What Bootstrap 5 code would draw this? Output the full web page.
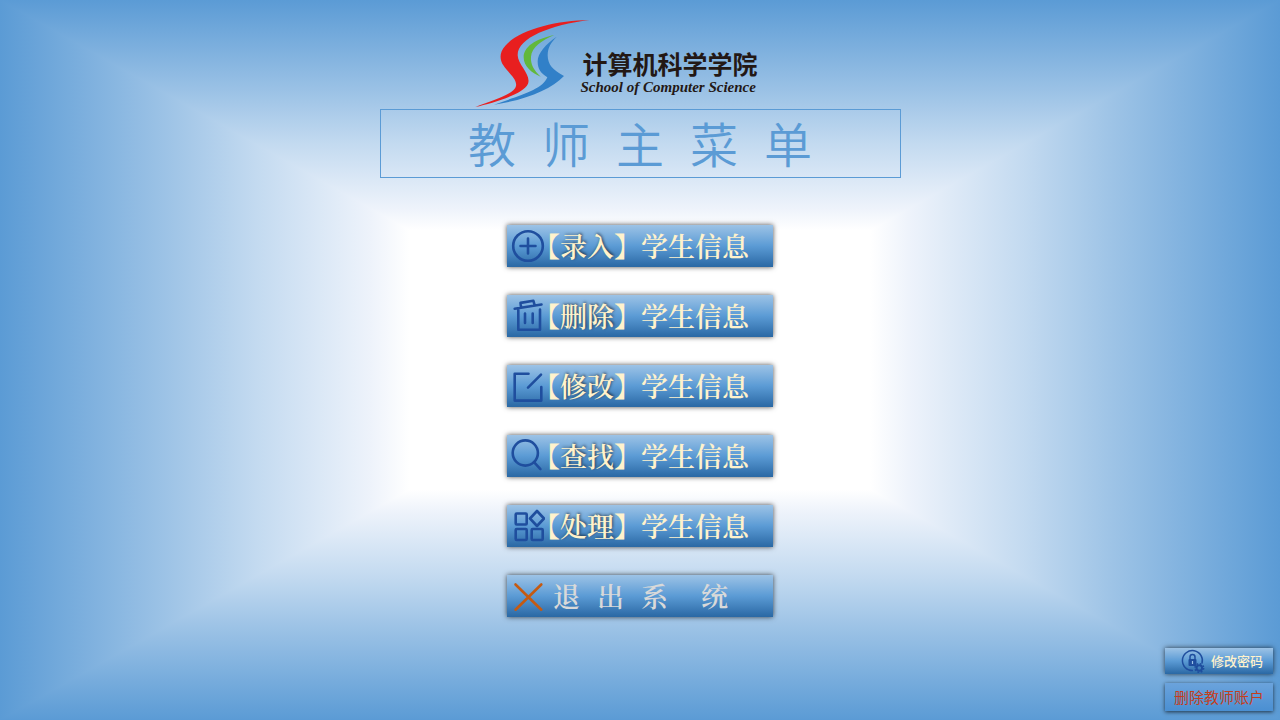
<!DOCTYPE html>
<html lang="zh-CN">
<head>
<meta charset="utf-8">
<meta name="viewport" content="width=device-width, initial-scale=1">
<title>教师主菜单</title>
<link href="https://cdn.jsdelivr.net/npm/bootstrap@5.3.0/dist/css/bootstrap.min.css" rel="stylesheet">
<style>
  :root {
    --ramp: #5b9bd5 0%, #9dc3e6 13%, #c3daf0 20%, #eef3fb 29%, #fff 32%, #fff 68%, #eef3fb 71%, #c3daf0 80%, #9dc3e6 87%, #5b9bd5 100%;
  }
  body {
    font-family: "Liberation Sans", "Noto Sans CJK SC", sans-serif;
    background: linear-gradient(to bottom, var(--ramp));
  }
  /* left and right wedges of the rectangular gradient */
  .wedges {
    background: linear-gradient(to right, var(--ramp));
    clip-path: polygon(0 0, 50% 50%, 100% 0, 100% 100%, 50% 50%, 0 100%);
    z-index: -1;
  }
  .page-column { max-width: 521px; padding-top: 19px; }
  .brand { padding-left: 95px; height: 90px; }
  .brand-mark { width: 115px; height: 88px; }
  .brand-text { margin-left: -9px; padding-top: 26px; color: #231815; }
  .brand-zh { font: 700 25px/36px "Noto Sans CJK SC", sans-serif; padding-left: 2px; }
  .brand-en { font: italic 700 15px/12px "Liberation Serif", serif; white-space: nowrap; }
  .page-title {
    border: 1px solid #5b9bd5; color: #5b9bd5; height: 69px; gap: 26px;
    font: 350 48px/64px "Noto Sans CJK SC", sans-serif;
  }
  .menu-list { width: 266px; margin-top: 47px; gap: 28px; }
  .menu-btn, .corner-btn {
    border: 0; padding: 0; white-space: nowrap; color: #fff2cc;
    background: linear-gradient(#9dc3e6, #5b9bd5 50%, #2a68a4);
    box-shadow: 0 0 5px rgba(0, 0, 0, .7);
  }
  .menu-btn {
    height: 42px;
    font: 600 27px/42px "Noto Serif CJK SC", "Noto Sans CJK SC", serif;
  }
  .menu-btn svg { width: 38px; height: 42px; flex: none; }
  .menu-label { margin-left: -12px; }
  .verb { text-shadow: 1px -1px 3px rgba(0, 0, 0, .6); }
  .exit-label { color: #d9d9d9; margin-left: 8px; gap: 17px; }
  .line-icon { fill: none; stroke: #1f4e9e; stroke-width: 2.6; stroke-linecap: round; stroke-linejoin: round; }
  .corner { width: 108px; gap: 9px; margin: 31px 7px 9px auto; }
  .corner-btn { font: 500 13px/26px "Noto Sans CJK SC", sans-serif; height: 26px; }
  .corner-btn svg { width: 46px; height: 26px; flex: none; }
  .corner-delete {
    height: 28px; font-weight: 400; font-size: 15px; line-height: 26px; color: #c43e1c;
    background: linear-gradient(#6ba3dc, #4a8fd2);
    box-shadow: 0 1px 4px rgba(0, 0, 0, .7);
  }
</style>
</head>
<body class="min-vh-100 d-flex flex-column position-relative">
<div class="wedges position-absolute top-0 start-0 w-100 h-100"></div>

<main class="page-column w-100 mx-auto">
  <header class="brand d-flex">
    <svg class="brand-mark flex-shrink-0" viewBox="45 28 345 264" role="img" aria-label="学院标志">
      <path fill="#e81f1f" d="M388 31C290 32 178 60 136 108C117 129 119 150 130 167C145 190 172 208 168 229C165 252 105 270 46 292C100 279 190 254 204 222C214 195 174 166 173 137C172 84 272 46 388 31Z"/>
      <path fill="#62b83b" d="M283 76C226 88 191 111 191 143C191 169 214 190 242 201C222 182 211 163 213 141C215 112 246 92 283 76Z"/>
      <path fill="#3180c8" d="M290 81C258 103 233 130 233 155C233 180 244 192 262 203C248 241 171 260 102 285C200 270 272 240 312 199C279 182 263 165 263 137C263 113 272 100 290 81Z"/>
    </svg>
    <div class="brand-text">
      <div class="brand-zh">计算机科学学院</div>
      <div class="brand-en">School of Computer Science</div>
    </div>
  </header>

  <h1 class="page-title d-flex justify-content-center mb-0">
    <span>教</span><span>师</span><span>主</span><span>菜</span><span>单</span>
  </h1>

  <nav class="menu-list d-flex flex-column mx-auto" aria-label="主菜单">
    <button type="button" class="menu-btn d-flex">
      <svg class="line-icon" viewBox="0 0 38 42"><circle cx="21" cy="21" r="14.8"/><path d="M13.5 21h15M21 13.5v15"/></svg>
      <span class="menu-label">【<span class="verb">录入</span>】学生信息</span>
    </button>
    <button type="button" class="menu-btn d-flex">
      <svg class="line-icon" viewBox="0 0 38 42"><path d="M7.7 13.700L34.5 9.500M14 12.100L13.5 7.900 26.4 5.800 27.6 10M11.3 14.500v20.3H33V14.500M18 18.500v9.5M25.7 18.500v9.5"/></svg>
      <span class="menu-label">【<span class="verb">删除</span>】学生信息</span>
    </button>
    <button type="button" class="menu-btn d-flex">
      <svg class="line-icon" viewBox="0 0 38 42"><path d="M21.5 8.800H7.7V35.600H34.3V22M21 22.600L34 9.600"/></svg>
      <span class="menu-label">【<span class="verb">修改</span>】学生信息</span>
    </button>
    <button type="button" class="menu-btn d-flex">
      <svg class="line-icon" viewBox="0 0 38 42"><circle cx="18.3" cy="18" r="12.6"/><path d="M27 27.200L33.4 34.100"/></svg>
      <span class="menu-label">【<span class="verb">查找</span>】学生信息</span>
    </button>
    <button type="button" class="menu-btn d-flex">
      <svg class="line-icon" viewBox="0 0 38 42"><rect x="8.7" y="8.500" width="11" height="11" rx="1"/><rect x="8.7" y="24" width="11" height="11" rx="1"/><rect x="24.7" y="24" width="11" height="11" rx="1"/><path d="M30 6l7 7.500-7 7.500-7-7.500z"/></svg>
      <span class="menu-label">【<span class="verb">处理</span>】学生信息</span>
    </button>
    <button type="button" class="menu-btn d-flex">
      <svg class="line-icon" style="stroke:#c55a11" viewBox="0 0 38 42"><path d="M8.5 9.5L34.3 34.7M34.3 9.5L8.5 34.7"/></svg>
      <span class="exit-label d-flex"><span>退</span><span>出</span><span>系</span><span class="ms-3">统</span></span>
    </button>
  </nav>
</main>

<div class="corner d-flex flex-column">
  <button type="button" class="corner-btn d-flex">
    <svg viewBox="0 0 46 26">
      <path fill="none" stroke="#1f4e9e" stroke-width="1.5" d="M28 22.6A10 10 0 1 1 37 15.5"/>
      <rect x="23.5" y="11" width="8" height="7" rx="1" fill="#1f4e9e"/>
      <path fill="none" stroke="#1f4e9e" stroke-width="1.5" d="M25 12V9a2.5 2.5 0 0 1 5 0V12"/>
      <path stroke="#9dc3e6" stroke-width="1.2" d="M27.5 13v3"/>
      <circle cx="34.3" cy="20" r="2.8" fill="none" stroke="#1f4e9e" stroke-width="2"/>
      <circle cx="34.3" cy="20" r="4.3" fill="none" stroke="#1f4e9e" stroke-width="1.6" stroke-dasharray="1.7 1.677"/>
    </svg>
    <span>修改密码</span>
  </button>
  <button type="button" class="corner-btn corner-delete text-center">删除教师账户</button>
</div>
<script src="https://cdn.jsdelivr.net/npm/bootstrap@5.3.0/dist/js/bootstrap.bundle.min.js"></script>
</body>
</html>
